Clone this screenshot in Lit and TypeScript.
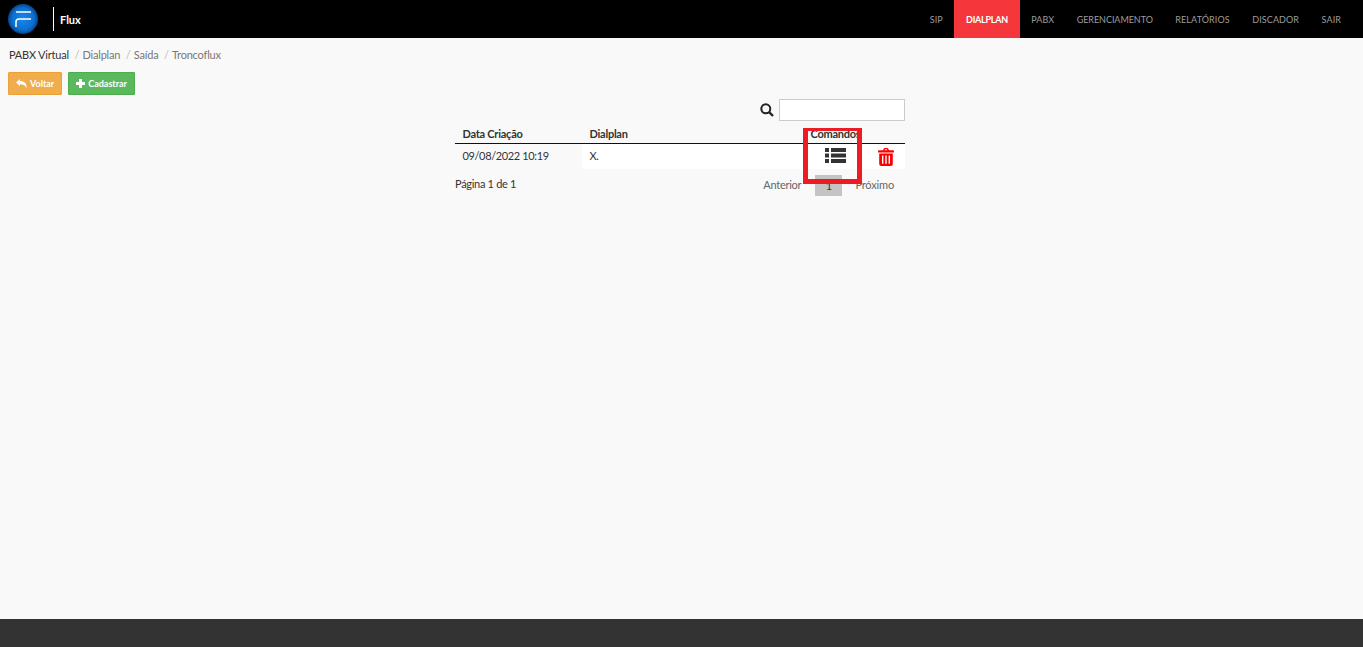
import { LitElement, html, css } from "lit";
import { customElement } from "lit/decorators.js";

@customElement("app-root")
export class AppRoot extends LitElement {
  static styles = css`
    :host { display: flex; flex-direction: column; height: 647px; background: #f9f9f9; font-family: Lato, sans-serif; color: #333; font-size: 12px; overflow: hidden; }
    .nav { height: 38px; background: #000; display: flex; align-items: center; flex: none; }
    .logo { margin-left: 8px; width: 30px; height: 30px; flex: none; display: block; }
    .sep { width: 1px; height: 24px; background: #fff; margin-left: 15px; }
    .brand { margin-left: 6px; color: #fff; font-size: 11px; font-weight: 700; }
    .menu { margin-left: auto; margin-right: 10.75px; display: flex; height: 38px; }
    .menu a { display: flex; align-items: center; padding: 0 11.25px; color: #9d9d9d; font-size: 9px; letter-spacing: 0.1px; text-transform: uppercase; }
    .menu a.tight { letter-spacing: -0.05px; }
    .menu a.active { background: #f5363b; color: #fff; font-weight: 700; padding: 0 12px; letter-spacing: -0.25px; }
    .main { flex: 1; display: flex; flex-direction: column; padding: 0 8px; }
    .crumbs { display: flex; margin-top: 10px; height: 14px; line-height: 14px; font-size: 11px; color: #777; letter-spacing: -0.2px; }
    .crumbs .first { color: #333; margin-left: 1px; }
    .crumbs .slash { color: #bbb; padding: 0 3.3px 0 5.5px; }
    .btns { display: flex; gap: 6px; margin-top: 10px; }
    .btn { display: flex; align-items: center; gap: 3px; height: 23px; box-sizing: border-box; padding: 0 7px; border: 1px solid; border-radius: 1px; color: #fff; font-size: 9px; font-weight: 700; }
    .warn { background: #f0ad4e; border-color: #eea236; }
    .ok { background: #5cb85c; border-color: #4cae4c; }
    .wrap { position: relative; width: 450px; margin: 4px 0 0 447px; }
    .search { display: flex; justify-content: flex-end; align-items: center; gap: 5px; }
    .search input { width: 126px; height: 22px; box-sizing: border-box; border: 1px solid #ccc; background: #fff; padding: 0; margin: 0; }
    table { width: 100%; border-collapse: collapse; table-layout: fixed; margin-top: 5px; }
    th { text-align: left; font-weight: 700; font-size: 11px; height: 17px; padding: 0 7.5px 2px; box-sizing: border-box; border-bottom: 1px solid #111; color: #333; line-height: 15px; letter-spacing: -0.25px; white-space: nowrap; }
    td { height: 25px; padding: 0 7.5px 2px; box-sizing: border-box; font-size: 11px; background: #fff; color: #333; letter-spacing: -0.37px; }
    td.first { background: #f9f9f9; }
    td.cmd { padding-bottom: 0; }
    .icons { display: flex; align-items: flex-start; padding-left: 14px; gap: 32px; height: 25px; padding-top: 4px; box-sizing: border-box; }
    .pager { display: flex; align-items: flex-start; margin-top: 6px; }
    .pager .info { font-size: 11px; letter-spacing: -0.3px; line-height: 17px; }
    .pages { margin-left: auto; display: flex; align-items: flex-start; color: #666; font-size: 11px; margin-right: 11px; line-height: 19px; }
    .prev { letter-spacing: -0.25px; }
    .next { letter-spacing: -0.15px; }
    .cur { width: 27px; height: 21px; line-height: 21px; background: #c4c4c4; text-align: center; margin: 0 13px 0 14px; color: #333; }
    .mark { position: absolute; left: 348px; top: 29px; width: 59px; height: 56px; box-sizing: border-box; border: 5px solid #ed1c24; border-top-width: 3px; }
    .footer { height: 28px; background: #333; flex: none; }
  `;

  render() {
    return html`
      <div class="nav">
        <svg class="logo" viewBox="0 0 30 30">
          <defs><radialGradient id="g" cx="50%" cy="50%" r="52%"><stop offset="0" stop-color="#1487ec"/><stop offset="0.7" stop-color="#0d6fd0"/><stop offset="1" stop-color="#053f80"/></radialGradient></defs>
          <circle cx="15" cy="15" r="15" fill="url(#g)"/>
          <path d="M8 8H23" stroke="#fff" stroke-width="1.5" fill="none"/>
          <path d="M8 23V18Q8 15 11 15H23" stroke="#fff" stroke-width="1.5" fill="none"/>
        </svg>
        <div class="sep"></div>
        <div class="brand">Flux</div>
        <div class="menu">
          <a>SIP</a><a class="active">Dialplan</a><a>PABX</a><a class="tight">Gerenciamento</a><a>Relatórios</a><a>Discador</a><a>Sair</a>
        </div>
      </div>
      <div class="main">
        <div class="crumbs">
          <span class="first">PABX Virtual</span><span class="slash">/</span><span>Dialplan</span><span class="slash">/</span><span>Saída</span><span class="slash">/</span><span>Troncoflux</span>
        </div>
        <div class="btns">
          <div class="btn warn">
            <svg width="11" height="10" viewBox="0 0 11 10"><path d="M0 3.5 4 0V2C8 2 11 4 10.5 9.5 9.5 6.5 7.5 5.2 4 5.2V7Z" fill="#fff"/></svg>
            Voltar
          </div>
          <div class="btn ok">
            <svg width="9" height="9" viewBox="0 0 9 9"><path d="M3 0H6V3H9V6H6V9H3V6H0V3H3Z" fill="#fff"/></svg>
            Cadastrar
          </div>
        </div>
        <div class="wrap">
          <div class="search">
            <svg width="14" height="14" viewBox="0 0 14 14"><circle cx="5.8" cy="5.8" r="4.5" fill="none" stroke="#222" stroke-width="2"/><path d="M9 9 13 13" stroke="#222" stroke-width="2.4"/></svg>
            <input type="text" />
          </div>
          <table>
            <colgroup><col style="width:127px"/><col style="width:221px"/><col /></colgroup>
            <thead><tr><th>Data Criação</th><th>Dialplan</th><th>Comandos</th></tr></thead>
            <tbody><tr>
              <td class="first">09/08/2022 10:19</td>
              <td>X.</td>
              <td class="cmd">
                <div class="icons">
                  <svg width="21" height="15" viewBox="0 0 21 15" fill="#333"><rect y="0" width="4" height="4"/><rect y="5.5" width="4" height="4"/><rect y="11" width="4" height="4"/><rect x="6" y="0" width="15" height="4"/><rect x="6" y="5.5" width="15" height="4"/><rect x="6" y="11" width="15" height="4"/></svg>
                  <svg width="16" height="18" viewBox="0 0 16 18"><path fill-rule="evenodd" fill="#f00" d="M5 2.2 5.8 .6Q6 0 6.8 0H9.2Q10 0 10.2 .6L11 2.2H15Q16 2.2 16 3.2V4.6H0V3.2Q0 2.2 1 2.2ZM6.6 2.2H9.4L9 1.3H7ZM1.2 5.6H14.8V16Q14.8 18 12.8 18H3.2Q1.2 18 1.2 16ZM4 7.5V15.8H5.4V7.5ZM7.3 7.5V15.8H8.7V7.5ZM10.6 7.5V15.8H12V7.5Z"/></svg>
                </div>
              </td>
            </tr></tbody>
          </table>
          <div class="pager">
            <span class="info">Página 1 de 1</span>
            <div class="pages"><span class="prev">Anterior</span><span class="cur">1</span><span class="next">Próximo</span></div>
          </div>
          <div class="mark"></div>
        </div>
      </div>
      <div class="footer"></div>
    `;
  }
}
